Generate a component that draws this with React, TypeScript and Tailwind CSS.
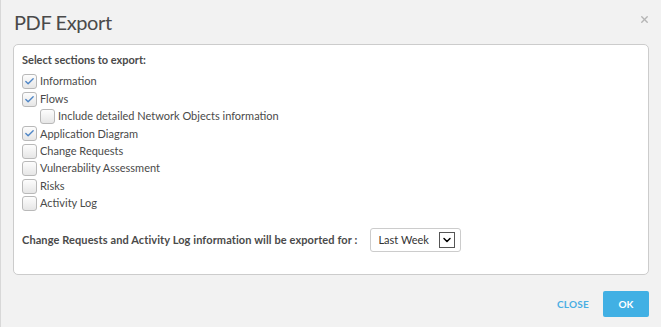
import { Check, ChevronDown, X } from "lucide-react";

const sections = [
  { label: "Information", checked: true, indent: false },
  { label: "Flows", checked: true, indent: false },
  { label: "Include detailed Network Objects information", checked: false, indent: true },
  { label: "Application Diagram", checked: true, indent: false },
  { label: "Change Requests", checked: false, indent: false },
  { label: "Vulnerability Assessment", checked: false, indent: false },
  { label: "Risks", checked: false, indent: false },
  { label: "Activity Log", checked: false, indent: false },
];

function Box({ checked }: { checked: boolean }) {
  return (
    <span className="flex h-[15px] w-[15px] shrink-0 items-center justify-center rounded-[3px] border border-[#b9b9b9] bg-gradient-to-b from-[#fdfdfd] to-[#e6e6e6]">
      {checked && <Check className="h-[11px] w-[11px] text-[#4f86c6]" strokeWidth={3} />}
    </span>
  );
}

export default function App() {
  return (
    <div
      className="h-[327px] w-[661px] border-l border-[#d8d8d8] bg-[#f2f2f2] text-[#444]"
      style={{ fontFamily: "Lato, 'Open Sans', sans-serif" }}
    >
      <div className="flex items-start justify-between px-[13px] pt-[8px]">
        <h1 className="text-[20px] leading-[28px] tracking-[-0.4px] text-[#4a4a4a]">PDF Export</h1>
        <X className="mt-[6px] mr-[-2px] h-[11px] w-[11px] text-[#b5b5b5]" strokeWidth={3} />
      </div>

      <div className="mx-[12px] mt-[8px] h-[231px] rounded-[5px] border border-[#cccccc] bg-white px-[8px] pt-[8px]">
        <p className="text-[11px] font-bold leading-[14px] text-[#4a4a4a]">Select sections to export:</p>
        <ul className="mt-[6px] flex flex-col">
          {sections.map((s) => (
            <li
              key={s.label}
              className={`flex h-[17.4px] items-center gap-[3px] text-[11px] text-[#4a4a4a] ${s.indent ? "pl-[18px]" : ""}`}
            >
              <Box checked={s.checked} />
              <span>{s.label}</span>
            </li>
          ))}
        </ul>
        <div className="mt-[16px] flex items-center">
          <span className="text-[11px] font-bold tracking-[0.1px] text-[#4a4a4a]">
            Change Requests and Activity Log information will be exported for :
          </span>
          <div className="ml-[13px] flex h-[24px] w-[91px] items-center justify-between rounded-[3px] border border-[#cccccc] bg-white pl-[7px] pr-[5px]">
            <span className="text-[11px] text-[#333]">Last Week</span>
            <span className="flex h-[16px] w-[16px] items-center justify-center border border-[#555] bg-white">
              <ChevronDown className="h-[12px] w-[12px] text-black" strokeWidth={3} />
            </span>
          </div>
        </div>
      </div>

      <div className="mt-[16px] flex items-center justify-end gap-[14px] pr-[12px]">
        <button className="text-[10px] font-bold tracking-wide text-[#4aaee3]">CLOSE</button>
        <button className="h-[26px] w-[46px] rounded-[2px] bg-[#41b0e4] text-[10px] font-bold text-white">
          OK
        </button>
      </div>
    </div>
  );
}
